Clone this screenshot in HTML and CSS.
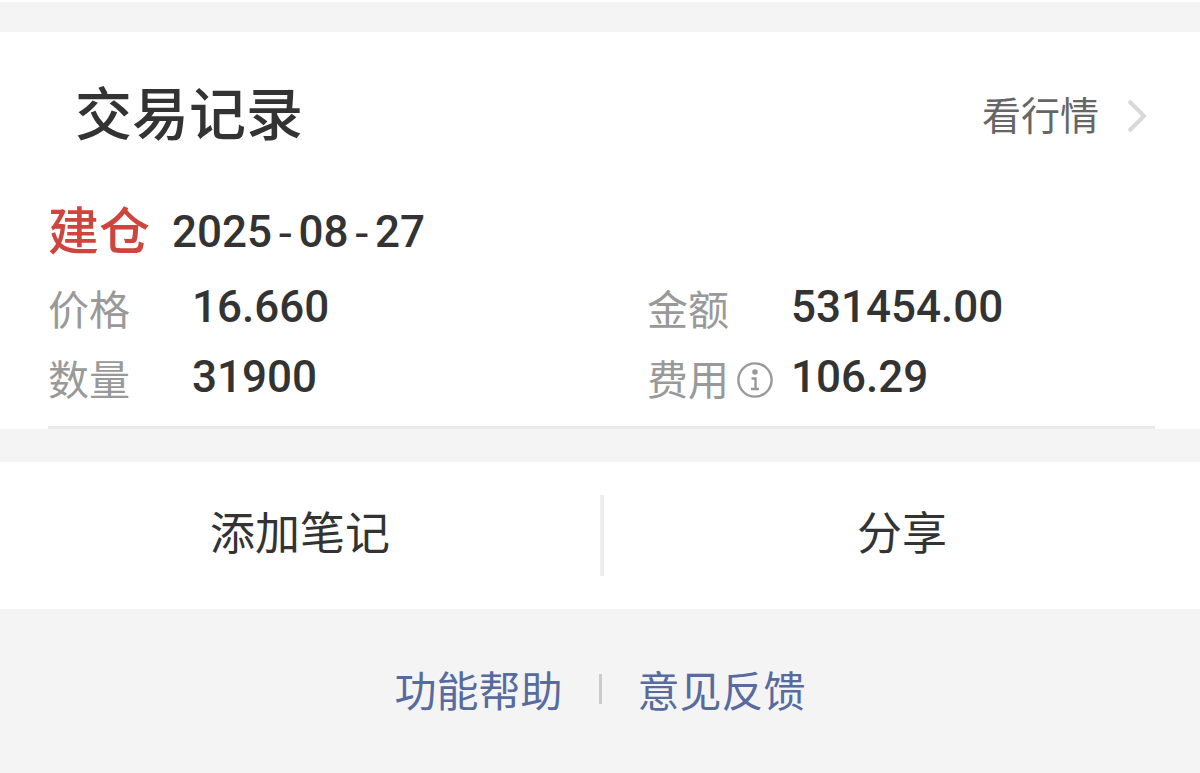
FILE: index.html
```
<!DOCTYPE html>
<html lang="zh-CN">
<head>
  <meta charset="UTF-8">
  <meta name="viewport" content="width=device-width, initial-scale=1.0">
  <title>交易记录</title>
  <link rel="stylesheet" href="styles.css">
</head>
<body>
  <section class="card">
    <header class="card-header">
      <h2>交易记录</h2>
      <a class="quote-link" href="#">
        <span>看行情</span>
        <svg class="arrow" viewBox="0 0 20 34" aria-hidden="true">
          <path d="M2 2L17 17L2 32" />
        </svg>
      </a>
    </header>
    <div class="record">
      <div class="record-title">
        <span class="record-type">建仓</span>
        <time datetime="2025-08-27">2025<span class="sep">-</span>08<span class="sep">-</span>27</time>
      </div>
      <dl class="record-data">
        <div class="item">
          <dt>价格</dt>
          <dd>16.660</dd>
        </div>
        <div class="item">
          <dt>金额</dt>
          <dd>531454.00</dd>
        </div>
        <div class="item">
          <dt>数量</dt>
          <dd>31900</dd>
        </div>
        <div class="item">
          <dt>费用
            <button class="info" type="button" aria-label="费用说明">
              <svg viewBox="0 0 36 36" aria-hidden="true">
                <circle cx="18" cy="18" r="16.6" />
                <circle class="dot" cx="18" cy="10" r="2.8" />
                <path d="M14.5 16.5H18.5V27M14 27H22" />
              </svg>
            </button>
          </dt>
          <dd>106.29</dd>
        </div>
      </dl>
    </div>
  </section>

  <div class="actions">
    <button type="button">添加笔记</button>
    <button type="button">分享</button>
  </div>

  <footer class="footer">
    <a href="#">功能帮助</a>
    <a href="#">意见反馈</a>
  </footer>
</body>
</html>
```
FILE: styles.css
```
* {
  box-sizing: border-box;
}
body {
  margin: 0;
  border-top: 2px solid #fff;
  padding-top: 30px;
  background: #f4f4f4;
  color: #333;
  font-family: "Noto Sans CJK SC", sans-serif;
}
a {
  text-decoration: none;
}
button {
  padding: 0;
  border: none;
  background: none;
  color: inherit;
  font-family: inherit;
  cursor: pointer;
}
.card {
  padding: 40px 45px 0 48px;
  background: #fff;
}
.card-header {
  display: flex;
  align-items: center;
  justify-content: space-between;
  height: 88px;
  padding: 0 8px 0 27px;
}
h2 {
  margin: 0;
  padding-bottom: 12px;
  font-size: 57px;
  font-weight: 500;
  line-height: 76px;
}
.quote-link {
  display: flex;
  align-items: center;
  gap: 28px;
  color: #666;
  font-size: 39px;
  line-height: 60px;
}
.quote-link span {
  padding-bottom: 6px;
}
.arrow {
  width: 20px;
  height: 34px;
  fill: none;
  stroke: #d8d8d8;
  stroke-width: 4;
}
.record {
  padding: 32px 0 14px;
  border-bottom: 3px solid #ececec;
}
.record-title {
  display: flex;
  align-items: center;
  gap: 22px;
  height: 80px;
}
.record-type {
  padding-bottom: 8px;
  color: #cd453d;
  font-size: 51px;
  font-weight: 500;
  line-height: 72px;
}
time, dd {
  font-family: Roboto, "Noto Sans CJK SC", sans-serif;
  font-size: 44px;
  font-weight: 500;
}
.sep {
  font-family: "DejaVu Sans Mono", monospace;
}
.record-data {
  display: grid;
  grid-template-columns: 599px 1fr;
  margin: 0;
}
.item {
  display: flex;
  align-items: center;
  height: 70px;
}
dt {
  display: flex;
  align-items: center;
  gap: 8px;
  width: 144px;
  color: #999;
  font-size: 41px;
  line-height: 60px;
}
dd {
  margin: 0;
}
.info, .info svg {
  display: block;
  width: 36px;
  height: 36px;
}
.info {
  margin-top: 6px;
}
.info svg {
  fill: none;
  stroke: #999;
  stroke-width: 2.4;
}
.info .dot {
  fill: #999;
  stroke: none;
}
.actions {
  display: flex;
  margin-top: 33px;
  padding: 33px 0;
  background: #fff;
}
.actions button {
  width: 50%;
  height: 81px;
  padding-bottom: 10px;
  font-size: 45px;
}
.actions button + button {
  border-left: 4px solid #eee;
}
.footer {
  display: flex;
  align-items: center;
  justify-content: center;
  height: 164px;
  padding-bottom: 4px;
  color: #576b9f;
  font-size: 42px;
}
.footer a {
  color: inherit;
  line-height: 60px;
}
.footer a + a {
  display: flex;
  align-items: center;
}
.footer a + a::before {
  content: "";
  width: 3px;
  height: 30px;
  margin: 0 36px;
  background: #ccc;
}
```
